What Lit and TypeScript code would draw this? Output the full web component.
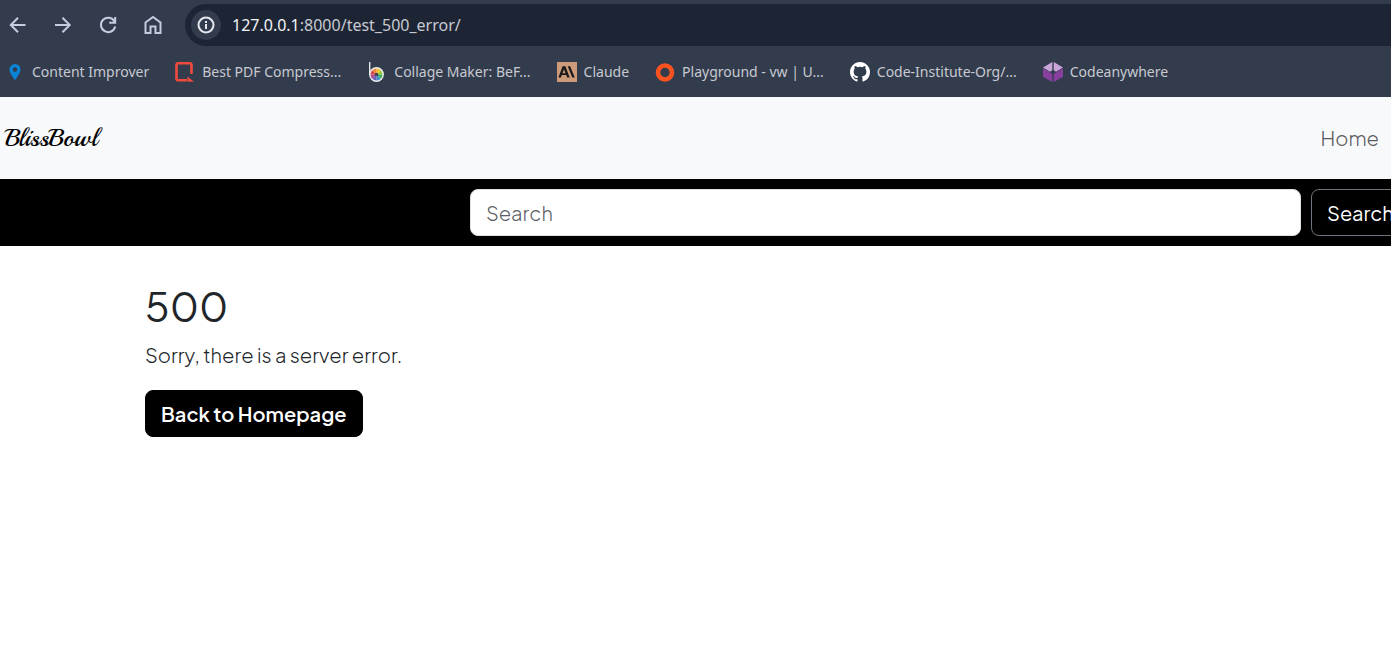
import { LitElement, html, css, svg } from "lit";
import { customElement } from "lit/decorators.js";

const pin = html`<svg class="icon" viewBox="0 0 20 20" aria-hidden="true"><path fill="#0a84d8" fill-rule="evenodd" d="M10 2a5.5 5.5 0 0 0-5.5 5.5C4.500 11.500 10 18 10 18s5.500-6.500 5.500-10.500A5.500 5.500 0 0 0 10 2zm0 3.300a2.300 2.300 0 1 1 0 4.600 2.300 2.300 0 0 1 0-4.600z"/></svg>`;
const pdf = html`<svg class="icon" viewBox="0 0 20 20" aria-hidden="true"><path fill="none" stroke="#ef4a3c" stroke-width="2.600" d="M12 18.300H3.300A1.800 1.800 0 0 1 1.500 16.500V3a1.800 1.800 0 0 1 1.800-1.700h11.400A1.800 1.800 0 0 1 16.500 3v9"/><path fill="#ef4a3c" d="M12.500 14.500 19 19.700h-6.500z"/></svg>`;
const wedges = ["#f2c230", "#a4c93a", "#3fae5a", "#3a8fc8", "#6b62b8", "#a84c8c", "#d84a4a", "#ee8a35"];
const collage = html`<svg class="icon" viewBox="0 0 20 20" aria-hidden="true"><path d="M2.700 0v13" stroke="#e8e8ea" stroke-width="1.400"/><circle cx="9.500" cy="12.500" r="7.400" fill="#eee"/>${wedges.map((c, i) => {
  const a = (i * Math.PI) / 4 - Math.PI / 2;
  const b = a + Math.PI / 4;
  return svg`<path fill=${c} d=${`M9.5 12.5L${9.5 + 6 * Math.cos(a)} ${12.5 + 6 * Math.sin(a)}A6 6 0 0 1 ${9.5 + 6 * Math.cos(b)} ${12.5 + 6 * Math.sin(b)}Z`}/>`;
})}<circle cx="9.500" cy="12.500" r="1.800" fill="#40424c"/></svg>`;
const claude = html`<svg class="icon" viewBox="0 0 20 20" aria-hidden="true"><path fill="#cc9b7a" d="M0 0h20v20H0z"/><path fill="#1b1a18" fill-rule="evenodd" d="M5.600 4.300h2.800l4.300 11.200h-2.500l-.9-2.400H4.800l-.9 2.400H1.400zm1.400 3-1.500 3.900h3zM10.700 4.300h2.400l4.700 11.200h-2.500z"/></svg>`;
const ring = html`<svg class="icon" viewBox="0 0 20 20" aria-hidden="true"><circle cx="10" cy="10.500" r="7" fill="none" stroke="#fc5220" stroke-width="4.600"/></svg>`;
const github = html`<svg class="icon" viewBox="0 0 16 16" aria-hidden="true"><path fill="#fff" d="M8 0C3.580 0 0 3.580 0 8c0 3.540 2.290 6.530 5.470 7.590.4.070.55-.17.55-.38 0-.19-.01-.82-.01-1.490-2.010.37-2.530-.49-2.690-.94-.09-.23-.48-.94-.82-1.130-.28-.15-.68-.52-.01-.53.63-.01 1.080.58 1.230.82.72 1.210 1.870.87 2.330.66.07-.52.28-.87.51-1.070-1.780-.2-3.640-.89-3.640-3.950 0-.87.31-1.590.82-2.150-.08-.2-.36-1.020.08-2.120 0 0 .67-.21 2.200.82a7.600 7.600 0 0 1 4 0c1.530-1.040 2.200-.82 2.200-.82.44 1.100.16 1.920.08 2.120.51.56.82 1.270.82 2.150 0 3.070-1.870 3.750-3.650 3.950.29.25.54.73.54 1.480 0 1.070-.01 1.930-.01 2.200 0 .21.15.46.55.38A8.010 8.010 0 0 0 16 8c0-4.420-3.580-8-8-8z"/></svg>`;
const cube = html`<svg class="icon" viewBox="0 0 20 20" aria-hidden="true"><path fill="#c9a5d8" d="M9.300 0v8.200L7 9.800 0 5.500zM10.700 0v8.200L13 9.800l7-4.300z"/><path fill="#873f9e" d="M0 6.300l6.700 4 2.600 1.700v8L0 14.700zM20 6.300l-6.700 4-2.600 1.700v8l9.300-5.300z"/></svg>`;

const bookmarks = [
  { icon: pin, label: "Content Improver" },
  { icon: pdf, label: "Best PDF Compress..." },
  { icon: collage, label: "Collage Maker: BeF..." },
  { icon: claude, label: "Claude" },
  { icon: ring, label: "Playground - vw | U..." },
  { icon: github, label: "Code-Institute-Org/..." },
  { icon: cube, label: "Codeanywhere" },
];

@customElement("browser-chrome")
export class BrowserChrome extends LitElement {
  static styles = css`
    :host {
      display: block;
      background: #333c4d;
      color: #c7cad1;
      font-family: "Segoe UI", "Noto Sans", "Open Sans", sans-serif;
      font-weight: 400;
    }
    .toolbar {
      display: flex;
      align-items: center;
      padding-top: 4px;
    }
    .nav {
      display: flex;
      gap: 21px;
      padding: 0 20px 0 6px;
    }
    .tool {
      display: flex;
      padding: 0;
      border: 0;
      background: none;
    }
    .tool svg {
      width: 24px;
      height: 24px;
      fill: none;
      stroke: #c3cce0;
      stroke-width: 2;
    }
    .address {
      flex: 1;
      display: flex;
      align-items: center;
      gap: 11px;
      height: 42px;
      padding-left: 6px;
      border-radius: 21px 0 0 21px;
      background: #1d2535;
      font-size: 16px;
    }
    .info {
      display: flex;
      padding: 5px;
      border: 0;
      border-radius: 50%;
      background: #333c4d;
    }
    .info svg {
      width: 20px;
      height: 20px;
      fill: none;
      stroke: #e6e8ee;
      stroke-width: 2;
    }
    .host {
      color: #f2f3f5;
    }
    .bookmarks {
      display: flex;
      gap: 26px;
      padding: 13px 0 12px 5px;
      overflow: hidden;
    }
    .bookmark {
      display: flex;
      align-items: center;
      gap: 7px;
      height: 26px;
      color: inherit;
      font-size: 14px;
      white-space: nowrap;
      text-decoration: none;
    }
    .icon {
      width: 20px;
      height: 20px;
      flex: none;
    }
  `;

  render() {
    return html`
      <div class="toolbar">
        <nav class="nav" aria-label="Browser">
          <button class="tool" aria-label="Back"><svg viewBox="0 0 24 24"><path d="M19.500 12H5M12 4.800 4.800 12l7.200 7.200"/></svg></button>
          <button class="tool" aria-label="Forward"><svg viewBox="0 0 24 24"><path d="M4 12h14.500M11.500 4.800l7.200 7.200-7.200 7.200"/></svg></button>
          <button class="tool" aria-label="Reload"><svg viewBox="0 0 24 24"><path d="M18.500 8.500A7.200 7.200 0 1 0 19.200 13.500M19.200 4v5.800h-6"/></svg></button>
          <button class="tool" aria-label="Home page"><svg viewBox="0 0 24 24"><path d="M4.500 9.500 12 4l7.500 5.500V20h-5v-6.500h-5V20h-5z"/></svg></button>
        </nav>
        <div class="address">
          <button class="info" aria-label="Site information"><svg viewBox="0 0 20 20"><circle cx="10" cy="10" r="7.500"/><path d="M10 9v5M10 6v2"/></svg></button>
          <span><span class="host">127.0.0.1</span>:8000/test_500_error/</span>
        </div>
      </div>
      <nav class="bookmarks" aria-label="Bookmarks">
        ${bookmarks.map((b) => html`<a class="bookmark" href="#">${b.icon}<span>${b.label}</span></a>`)}
      </nav>
    `;
  }
}

@customElement("app-root")
export class AppRoot extends LitElement {
  static styles = css`
    :host {
      display: block;
      overflow: hidden;
      background: #fff;
      color: #212529;
      font-family: "Plus Jakarta Sans", Inter, sans-serif;
      font-size: 20px;
      font-weight: 300;
      line-height: 30px;
    }
    .header {
      display: flex;
      align-items: center;
      justify-content: space-between;
      height: 82px;
      padding: 0 12px 0 5px;
      background: #f8f9fb;
    }
    .brand {
      color: #000;
      font-family: "Playball", "Dancing Script", "Liberation Serif", serif;
      font-size: 25px;
      font-weight: 400;
      text-decoration: none;
    }
    .link {
      color: #595a5c;
      text-decoration: none;
    }
    .search {
      display: flex;
      gap: 10px;
      margin: 0;
      padding: 10px 0 10px 470px;
      background: #000;
    }
    .field,
    .submit,
    .back {
      box-sizing: border-box;
      height: 47px;
      border: 1px solid #dee2e6;
      border-radius: 8px;
      padding: 0 15px;
      font: inherit;
    }
    .field {
      flex: 1 0 auto;
      width: calc(100% - 90px);
      background: #fff;
    }
    .field::placeholder {
      color: #5c6066;
      opacity: 1;
    }
    .submit {
      flex: none;
      border-color: #6c757d;
      background: #000;
      color: #fff;
      font-weight: 400;
    }
    .content {
      width: calc(100% - 48px);
      max-width: 1101px;
      margin: 0 auto;
      padding: 35px 0;
    }
    .title {
      margin: 0 0 9px;
      font-size: 40px;
      font-weight: 400;
      line-height: 50px;
    }
    .message {
      margin: 0 0 20px;
    }
    .back {
      display: inline-flex;
      align-items: center;
      border-color: #000;
      background: #000;
      color: #fff;
      font-weight: 600;
      text-decoration: none;
    }
  `;

  render() {
    return html`
      <browser-chrome></browser-chrome>
      <header class="header">
        <a class="brand" href="#">BlissBowl</a>
        <a class="link" href="#">Home</a>
      </header>
      <form class="search" role="search">
        <input class="field" type="search" placeholder="Search" aria-label="Search" />
        <button class="submit" type="button">Search</button>
      </form>
      <main class="content">
        <h1 class="title">500</h1>
        <p class="message">Sorry, there is a server error.</p>
        <a class="back" href="#">Back to Homepage</a>
      </main>
    `;
  }
}
